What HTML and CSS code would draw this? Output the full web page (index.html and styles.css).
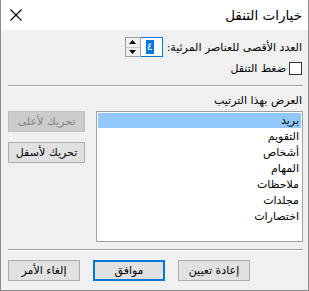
FILE: index.html
```html
<!DOCTYPE html>
<html lang="ar" dir="rtl">
<head>
    <meta charset="UTF-8">
    <title>خيارات التنقل</title>
    <link rel="stylesheet" href="styles.css">
</head>
<body>

<div class="window">
    <div class="titlebar">
        <span class="title">خيارات التنقل</span>
        <span class="close">
            <svg width="12" height="12" viewBox="0 0 12 12">
                <path d="M0.5 0.5 L11.5 11.5 M11.5 0.5 L0.5 11.5" stroke="#000" stroke-width="1.1" fill="none"/>
            </svg>
        </span>
    </div>

    <div class="content">
        <div class="max-row">
            <span class="label">العدد الأقصى للعناصر المرئية:</span>
            <span class="num-input"><span class="sel">٤</span></span>
            <span class="spin">
                <span class="spin-btn">
                    <svg width="7" height="4" viewBox="0 0 7 4"><path d="M3.5 0 L7 4 L0 4 Z" fill="#000"/></svg>
                </span>
                <span class="spin-btn">
                    <svg width="7" height="4" viewBox="0 0 7 4"><path d="M0 0 L7 0 L3.5 4 Z" fill="#000"/></svg>
                </span>
            </span>
        </div>

        <label class="check-row">
            <span class="checkbox"></span>
            <span>ضغط التنقل</span>
        </label>

        <div class="sep"></div>

        <div class="order-label">العرض بهذا الترتيب</div>
        <div class="order-row">
            <ul class="list">
                <li class="selected">بريد</li>
                <li>التقويم</li>
                <li>أشخاص</li>
                <li>المهام</li>
                <li>ملاحظات</li>
                <li>مجلدات</li>
                <li>اختصارات</li>
            </ul>
            <div class="side-buttons">
                <button class="btn" disabled>تحريك لأعلى</button>
                <button class="btn">تحريك لأسفل</button>
            </div>
        </div>

        <div class="sep bottom-sep"></div>

        <div class="footer">
            <button class="btn wide">إعادة تعيين</button>
            <button class="btn wide default">موافق</button>
            <button class="btn wide">إلغاء الأمر</button>
        </div>
    </div>
</div>

</body>
</html>
```

FILE: styles.css
```css
/* Ventana de diálogo */
body {
    margin: 0;
    font-family: 'DejaVu Sans', sans-serif;
    font-size: 11px;
    color: #000;
    background: #f0f0f0;
}
.window {
    width: 309px;
    height: 291px;
    box-sizing: border-box;
    border: 1px solid #8a8a8a;
    border-top: none;
    background: #f0f0f0;
    display: flex;
    flex-direction: column;
}
.titlebar {
    height: 30px;
    background: #ffffff;
    display: flex;
    align-items: center;
    justify-content: space-between;
    padding: 0 6px 0 9px;
}
.title {
    font-size: 13.5px;
    padding-bottom: 1px;
}
.close {
    display: flex;
    margin-top: -1px;
}
.content {
    flex: 1;
    padding: 7px 5px 0 7px;
}
.max-row {
    display: flex;
    align-items: center;
    height: 20px;
}
.label {
    margin-left: 4px;
    margin-right: 1px;
}
.num-input {
    width: 22px;
    height: 20px;
    box-sizing: border-box;
    border: 1px solid #0078d7;
    border-left: none;
    background: #fff;
    display: flex;
    align-items: center;
    justify-content: flex-start;
    padding-right: 8px;
}
.sel {
    background: #0078d7;
    color: #fff;
    line-height: 14px;
    padding: 0 1px;
}
.spin {
    width: 16px;
    height: 20px;
    box-sizing: border-box;
    border: 1px solid #a0a0a0;
    display: flex;
    flex-direction: column;
    background: #f0f0f0;
}
.spin-btn {
    flex: 1;
    display: flex;
    align-items: center;
    justify-content: center;
}
.spin-btn + .spin-btn {
    border-top: 1px solid #c8c8c8;
}
.check-row {
    display: flex;
    align-items: center;
    margin-top: 5px;
    height: 13px;
}
.checkbox {
    width: 13px;
    height: 13px;
    box-sizing: border-box;
    border: 1px solid #333;
    background: #fff;
    margin-left: 3px;
    margin-right: 1px;
}
.sep {
    height: 0;
    border-top: 1px solid #a0a0a0;
    border-bottom: 1px solid #fff;
    margin-top: 10px;
}
.order-label {
    margin-top: 6px;
    margin-right: 1px;
    height: 15px;
    line-height: 15px;
}
.order-row {
    display: flex;
    align-items: flex-start;
    gap: 11px;
    margin-top: 3px;
}
.list {
    list-style: none;
    margin: 0;
    padding: 1px;
    width: 208px;
    height: 131px;
    box-sizing: border-box;
    border: 1px solid #a0a0a0;
    background: #fff;
}
.list li {
    height: 16px;
    line-height: 16px;
    padding-right: 2px;
}
.list li.selected {
    background: #91c9ff;
    height: 15px;
    line-height: 15px;
    margin-bottom: 1px;
}
.side-buttons {
    display: flex;
    flex-direction: column;
    gap: 10px;
}
.btn {
    font-family: 'DejaVu Sans', sans-serif;
    font-size: 11px;
    color: #000;
    background: #e1e1e1;
    border: 1px solid #adadad;
    width: 77px;
    height: 21px;
    padding: 0;
    margin: 0;
}
.btn:disabled {
    background: #cccccc;
    border-color: #bfbfbf;
    color: #838383;
}
.btn.wide {
    width: 72px;
}
.btn.default {
    border: 2px solid #0078d7;
}
.bottom-sep {
    margin-top: 7px;
}
.footer {
    display: flex;
    justify-content: flex-end;
    gap: 13px;
    margin-top: 9px;
}
```
